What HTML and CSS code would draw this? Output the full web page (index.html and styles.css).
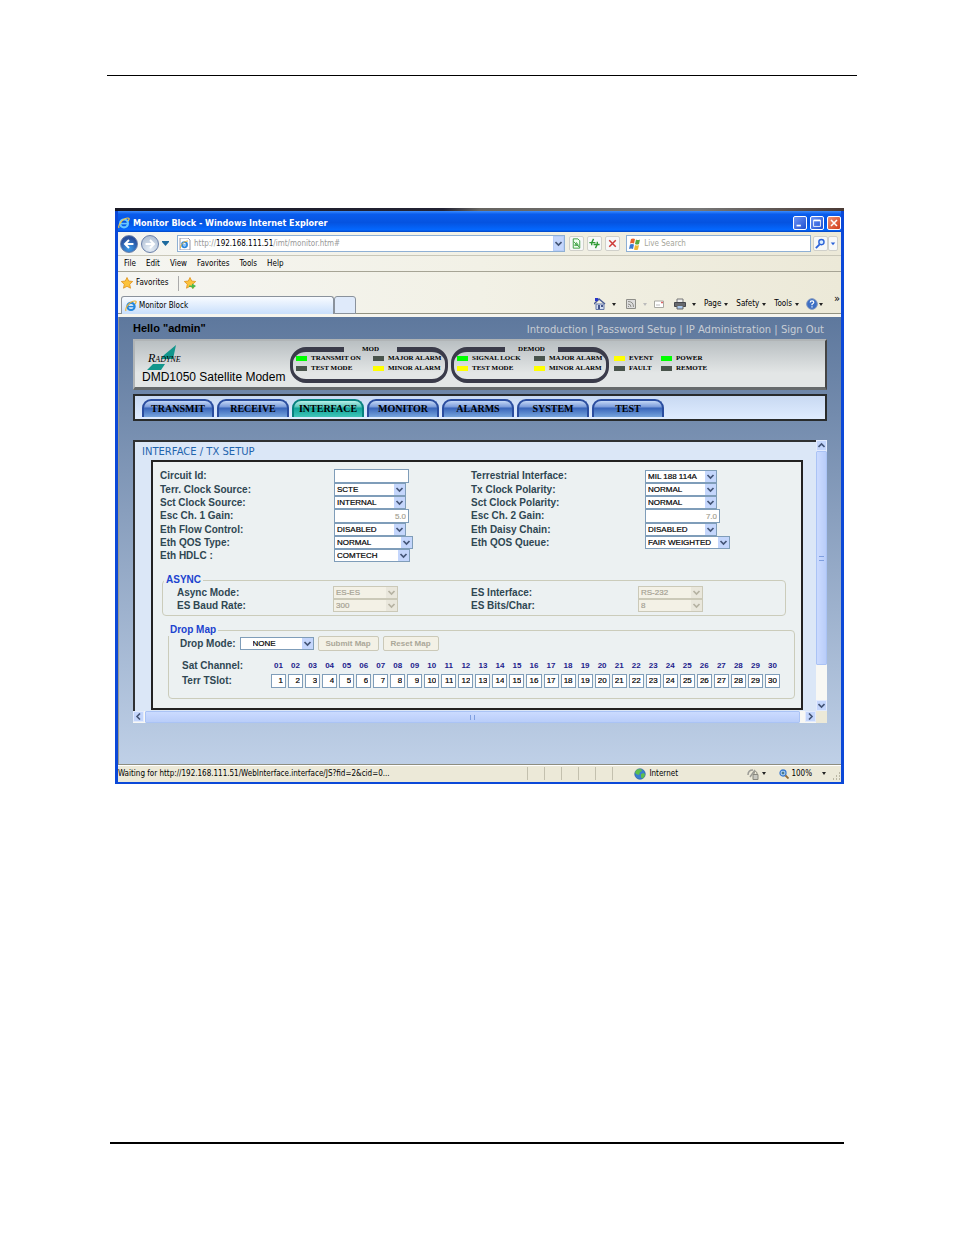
FILE: index.html
```html
<!DOCTYPE html>
<html lang="en">
<head>
<meta charset="utf-8">
<title>Monitor Block</title>
<link rel="stylesheet" href="styles.css">
</head>
<body>
<div class="sheet">
<hr class="rule-top">
<section class="window">
  <div class="desktop-strip"></div>
  <header class="titlebar">
    <svg class="ie" viewBox="0 0 12 12"><circle cx="6" cy="6.4" r="3.9" fill="none" stroke="#69c8ff" stroke-width="2.2"/><path d="M2.5 6.6h7" stroke="#69c8ff" stroke-width="1.6"/><path d="M1 11C-.5 8 5 1 10 1c2 0 1 2 0 3" fill="none" stroke="#f5c842" stroke-width="1.2"/></svg>
    <h1>Monitor Block - Windows Internet Explorer</h1>
    <button class="win-btn" aria-label="Minimize"><svg viewBox="0 0 14 14"><path d="M3 10h5" stroke="#fff" stroke-width="2"/></svg></button>
    <button class="win-btn" aria-label="Maximize"><svg viewBox="0 0 14 14"><path d="M3 4h8v7H3z" fill="none" stroke="#fff"/><path d="M3 4h8" stroke="#fff" stroke-width="2"/></svg></button>
    <button class="win-btn close" aria-label="Close"><svg viewBox="0 0 14 14"><path d="M3.5 3.5l7 7m0-7l-7 7" stroke="#fff" stroke-width="1.8"/></svg></button>
  </header>
  <div class="chrome">
    <div class="navrow">
      <button class="round back" aria-label="Back"><svg viewBox="0 0 18 18"><path d="M9 4.5L4.5 9 9 13.500M5 9h9" fill="none" stroke="#fff" stroke-width="2.2"/></svg></button>
      <button class="round fwd" aria-label="Forward"><svg viewBox="0 0 18 18"><path d="M9 4.5l4.500 4.500L9 13.500M13 9H4" fill="none" stroke="#fff" stroke-width="2.2"/></svg></button>
      <button class="bare recent" aria-label="Recent pages"><svg viewBox="0 0 7 5"><path d="M0 0h7v1L3.500 5 0 1z" fill="#1d6a9e"/></svg></button>
      <div class="address">
        <svg class="ie" viewBox="0 0 12 12"><path d="M1 0h8l2 2v10H1z" fill="#fff" stroke="#99a"/><circle cx="5.500" cy="6.800" r="2.600" fill="none" stroke="#2a86dd" stroke-width="1.700"/><path d="M3 7h5" stroke="#2a86dd"/><path d="M1.500 10C1 7 5 3 9 3" fill="none" stroke="#eeb73c"/></svg>
        <span class="url">http://<b>192.168.111.51</b>/imt/monitor.htm#</span>
        <button class="combo" aria-label="Show addresses"></button>
      </div>
      <button class="tool" aria-label="Compatibility view"><svg viewBox="0 0 14 14"><path d="M3.500 2h5l2 2v8h-7z" fill="#efe" stroke="#379c3c"/><path d="M5 9l2-3 2 3zM4 5l6 6" fill="none" stroke="#379c3c"/></svg></button>
      <button class="tool" aria-label="Refresh"><svg viewBox="0 0 14 14"><path d="M6 2L4 6h4M1.500 6H4v3M8 12l2-4H6M12.500 8H10V5" fill="none" stroke="#2f9a34" stroke-width="1.500"/></svg></button>
      <button class="tool" aria-label="Stop"><svg viewBox="0 0 14 14"><path d="M3.500 3.500l7 7m0-7l-7 7" stroke="#ce3a38" stroke-width="1.600"/></svg></button>
      <div class="search">
        <svg class="ie" viewBox="0 0 12 12"><path d="M2 1q2-1 4 0L5 5.500q-2-1-4 0z" fill="#e8622c"/><path d="M7 1.500q2 1 4 0L10 6q-2 1-4 0z" fill="#5aaa3c"/><path d="M1 6.500q2-1 4 0L4 11q-2-1-4 0z" fill="#3a78d0"/><path d="M6 7q2 1 4 0L9 11.500q-2 1-4 0z" fill="#f0b832"/></svg>
        <input type="text" placeholder="Live Search" aria-label="Live Search">
      </div>
      <div class="search-btns">
        <button class="tool" aria-label="Search"><svg viewBox="0 0 14 14"><circle cx="8" cy="5.500" r="2.800" fill="#d8ecff" stroke="#2a62d8" stroke-width="1.500"/><path d="M6 8l-4 4" stroke="#2a62d8" stroke-width="2"/></svg></button>
        <button class="tool slim" aria-label="Search options"><svg viewBox="0 0 9 14"><path d="M2 6h5L4.500 9z" fill="#2a62d8"/></svg></button>
      </div>
    </div>
    <nav class="menubar"><a href="#">File</a><a href="#">Edit</a><a href="#">View</a><a href="#">Favorites</a><a href="#">Tools</a><a href="#">Help</a></nav>
    <div class="favbar">
      <svg viewBox="0 0 12 12"><path d="M6 .5l1.700 3.500 4 .5-3 2.700.8 4L6 9.300 2.500 11.200l.8-4-3-2.700 4-.5z" fill="#fcc33c" stroke="#e0921c" stroke-width=".8"/></svg>
      <a href="#">Favorites</a><i></i>
      <svg viewBox="0 0 12 12"><path d="M6 .5l1.700 3.500 4 .5-3 2.700.8 4L6 9.300 2.500 11.200l.8-4-3-2.700 4-.5z" fill="#fcc33c" stroke="#e0921c" stroke-width=".8"/><path d="M5 8.500h3v-2L12 9l-4 3v-2H5z" fill="#4cb84a"/></svg>
    </div>
    <div class="tabrow">
      <a class="page-tab" href="#"><svg class="ie" viewBox="0 0 12 12"><circle cx="6" cy="6.400" r="3.600" fill="none" stroke="#2488dd" stroke-width="2.200"/><path d="M2.500 6.600h7" stroke="#2488dd" stroke-width="1.400"/><path d="M1 11C-.5 8 5 1 10 1c2 0 1 2 0 3" fill="none" stroke="#eab43a" stroke-width="1.200"/></svg>Monitor Block</a>
      <button class="new-tab" aria-label="New tab"></button>
      <div class="commands">
        <svg class="c-home" viewBox="0 0 12 12"><path d="M0 6l5-5 6 5" fill="none" stroke="#4a5d94" stroke-width="1.500"/><path d="M2 6h8v5.500H2z" fill="#d3def2" stroke="#6679a8"/><path d="M4 7h2v4H4zM7 7h2v2H7z" fill="#45568a"/><path d="M1 0h3v3H1z" fill="#2834c8"/></svg><span class="caret"></span>
        <svg class="c-rss" viewBox="0 0 10 10"><path d="M.5.500h9v9h-9z" fill="#ddd" stroke="#8e8e88"/><path d="M2 7.500h1M2 5q3 0 3 3M2 2.500q5.500 0 5.500 5.500" fill="none" stroke="#8e8e88"/></svg><span class="caret pale"></span>
        <svg class="c-mail" viewBox="0 0 10 10"><path d="M.5 2h9v6.500h-9z" fill="#fff" stroke="#a9a9a2"/><path d="M2 6h4" stroke="#bbb"/><path d="M7 3.500h2" stroke="#d66" stroke-width="1.500"/></svg>
        <svg class="c-print" viewBox="0 0 12 12"><path d="M3 1h6v4H3z" fill="#eee" stroke="#777"/><path d="M.5 4.500h11v4H.500z" fill="#67696e" stroke="#45474c"/><path d="M3 7.500h6v3.500H3z" fill="#a9c8ee" stroke="#666"/></svg><span class="caret"></span>
        <a href="#">Page<span class="caret"></span></a><a href="#">Safety<span class="caret"></span></a><a href="#">Tools<span class="caret"></span></a>
        <button class="bare help" aria-label="Help"><svg viewBox="0 0 12 12"><circle cx="6" cy="6" r="5.300" fill="#3d6fc4" stroke="#7d93bd"/><path d="M4.200 4.500q0-1.700 1.800-1.700t1.800 1.500q0 1-1.800 1.900v1M6 8.300v1.300" fill="none" stroke="#fff" stroke-width="1.200"/></svg><span class="caret"></span></button>
        <span class="more">»</span>
      </div>
    </div>
  </div>

  <main class="viewport">
    <div class="hello"><strong>Hello "admin"</strong>
      <nav><a href="#">Introduction</a> | <a href="#">Password Setup</a> | <a href="#">IP Administration</a> | <a href="#">Sign Out</a></nav></div>
    <section class="device">
      <div class="brand">
        <svg viewBox="0 0 36 25" role="img" aria-label="Radyne"><path d="M29 0L17 10l-3 4h12zM6 19h12l-4 6H0z" fill="#12968c"/><text x="1" y="17" class="radyne"><tspan font-size="12">R</tspan>ADYNE</text></svg>
        <h2>DMD1050 Satellite Modem</h2>
      </div>
      <fieldset class="leds"><legend>MOD</legend>
        <span class="on">TRANSMIT ON</span><span>MAJOR ALARM</span><span>TEST MODE</span><span class="warn">MINOR ALARM</span></fieldset>
      <fieldset class="leds"><legend>DEMOD</legend>
        <span class="on">SIGNAL LOCK</span><span>MAJOR ALARM</span><span class="warn">TEST MODE</span><span class="warn">MINOR ALARM</span></fieldset>
      <div class="leds unit"><span class="warn">EVENT</span><span class="on">POWER</span><span>FAULT</span><span>REMOTE</span></div>
    </section>
    <nav class="tabs"><a href="#">TRANSMIT</a><a href="#">RECEIVE</a><a href="#" class="active">INTERFACE</a><a href="#">MONITOR</a><a href="#">ALARMS</a><a href="#">SYSTEM</a><a href="#">TEST</a></nav>

    <div class="frame">
      <div class="pane">
        <h3>INTERFACE / TX SETUP</h3>
        <form class="setup">
          <div class="fields">
            <label for="cid">Circuit Id:</label><input id="cid" type="text">
            <label for="ti">Terrestrial Interface:</label><select id="ti"><option>MIL 188 114A</option></select>
            <label for="tcs">Terr. Clock Source:</label><select id="tcs"><option>SCTE</option></select>
            <label for="tcp">Tx Clock Polarity:</label><select id="tcp"><option>NORMAL</option></select>
            <label for="scs">Sct Clock Source:</label><select id="scs"><option>INTERNAL</option></select>
            <label for="scp">Sct Clock Polarity:</label><select id="scp"><option>NORMAL</option></select>
            <label for="g1">Esc Ch. 1 Gain:</label><input id="g1" type="text" value="5.0" disabled>
            <label for="g2">Esc Ch. 2 Gain:</label><input id="g2" type="text" value="7.0" disabled>
            <label for="efc">Eth Flow Control:</label><select id="efc"><option>DISABLED</option></select>
            <label for="edc">Eth Daisy Chain:</label><select id="edc"><option>DISABLED</option></select>
            <label for="eqt">Eth QOS Type:</label><select id="eqt" class="w-79"><option>NORMAL</option></select>
            <label for="eqq">Eth QOS Queue:</label><select id="eqq" class="w-85"><option>FAIR WEIGHTED</option></select>
            <label for="hdlc">Eth HDLC :</label><select id="hdlc" class="w-76"><option>COMTECH</option></select>
          </div>
          <fieldset class="group async"><legend>ASYNC</legend>
            <div class="async-grid">
            <label for="am">Async Mode:</label><select id="am" disabled><option>ES-ES</option></select>
            <label for="esi">ES Interface:</label><select id="esi" disabled><option>RS-232</option></select>
            <label for="ebr">ES Baud Rate:</label><select id="ebr" disabled><option>300</option></select>
            <label for="ebc">ES Bits/Char:</label><select id="ebc" disabled><option>8</option></select>
            </div>
          </fieldset>
          <fieldset class="group drop"><legend>Drop Map</legend>
            <div class="mode"><label for="dm">Drop Mode:</label><select id="dm"><option>NONE</option></select><button type="button" disabled class="submit">Submit Map</button><button type="button" disabled>Reset Map</button></div>
            <table class="slots"><tbody><tr id="channels"><th scope="row">Sat Channel:</th></tr><tr id="slots"><th scope="row">Terr TSlot:</th></tr></tbody></table>
          </fieldset>
        </form>
      </div>
      <div class="vbar"><button type="button" class="sb up" aria-label="Scroll up"></button><div class="thumb"><i></i></div><button type="button" class="sb down" aria-label="Scroll down"></button></div>
      <div class="hbar"><button type="button" class="sb left" aria-label="Scroll left"></button><div class="thumb"><i></i></div><button type="button" class="sb right" aria-label="Scroll right"></button></div>
      <div class="corner"></div>
    </div>
  </main>

  <footer class="status">
    <span class="msg">Waiting for http://192.168.111.51/WebInterface.interface/JS?fid=2&amp;cid=0...</span>
    <i></i><i></i><i></i><i></i><i></i><i></i>
    <span class="zone"><svg viewBox="0 0 12 12"><circle cx="6" cy="6" r="5.300" fill="#3a7ed0" stroke="#2a5f9a" stroke-width=".6"/><path d="M3 1.500l4-.5 1 2-2 1-1 3-3-1-1-2zM7 6l3-1 1 2-2 3.500-2-1z" fill="#5fc04a"/></svg>Internet</span>
    <span class="lock"><svg viewBox="0 0 12 12"><path d="M1 7q0-5 5-5M3 9l5-7" fill="none" stroke="#9c9c96" stroke-width="1.500"/><path d="M6 6.500h5v5H6z" fill="#c7c7c0" stroke="#88887f"/><path d="M7 6.500v-2q1.500-2 3 0v2" fill="none" stroke="#88887f"/></svg><span class="caret"></span></span>
    <button class="bare zoom"><svg viewBox="0 0 10 10"><circle cx="4" cy="4" r="3" fill="#bfe0ff" stroke="#3a7ad0" stroke-width="1.300"/><path d="M2.500 4h3M4 2.500v3" stroke="#256"/><path d="M6.500 6.500l3 3" stroke="#936b35" stroke-width="1.800"/></svg>100%<span class="caret"></span></button>
    <svg class="grip" viewBox="0 0 10 10"><path d="M8 2h1M8 5h1M5 5h1M8 8h1M5 8h1M2 8h1" stroke="#aaa793" stroke-width="1.500"/></svg>
  </footer>
</section>
<hr class="rule-bottom">
</div>
<script src="slots.js"></script>
</body>
</html>
```
FILE: slots.js
```js
const channels = document.getElementById('channels');
const slots = document.getElementById('slots');
for (let n = 1; n <= 30; n++) {
  const head = document.createElement('td');
  head.textContent = String(n).padStart(2, '0');
  channels.append(head);
  const cell = document.createElement('td');
  const input = document.createElement('input');
  input.type = 'text';
  input.value = n;
  input.setAttribute('aria-label', 'Terr TSlot ' + n);
  cell.append(input);
  slots.append(cell);
}
```
FILE: styles.css
```css
* { box-sizing: border-box; }
body { margin: 0; background: #fff; color: #000; font: 8px/10px "DejaVu Sans Condensed", "DejaVu Sans", sans-serif; }
a { color: inherit; text-decoration: none; }
button, input, select { font: inherit; margin: 0; padding: 0; border-radius: 0; }
h1, h2, h3 { margin: 0; }
svg { display: block; flex: none; }
.sheet { padding: 75px 110px 90px 115px; }
hr { border: 0; margin: 0; background: #000; }
.rule-top { height: 1px; margin: 0 -13px 132px -8px; }
.rule-bottom { height: 2px; margin: 358px 0 0 -5px; }
.bare { display: flex; align-items: center; border: 0; background: none; }
.caret { display: inline-block; flex: none; border: 2px solid transparent; border-top: 3px solid #222; border-bottom: 0; }
.caret.pale { border-top-color: #bbb; }

/* browser window */
.window { border: solid #0b48d8; border-width: 0 3px 2px; background: #ece9d8; }
.desktop-strip { height: 3px; margin: 0 -3px; background: linear-gradient(90deg, #1a1a26, #223 45%, #666460 50%, #777 80%, #4a3a35); }
.titlebar { display: flex; align-items: center; gap: 3px; height: 21px; padding: 2px 0 0 0; background: linear-gradient(#3a8cff, #0a5cec 15%, #0553e0 55%, #0468ff 90%, #0344c0); }
.titlebar h1 { flex: 1; color: #fff; font: bold 9px/12px "DejaVu Sans Condensed", sans-serif; }
.ie { width: 12px; height: 12px; }
.win-btn { width: 14px; height: 14px; border: 1px solid #fff; border-radius: 2px; background: linear-gradient(135deg, #6e95f5, #1e4fd0); }
.win-btn svg { width: 12px; height: 12px; }
.win-btn.close { background: linear-gradient(135deg, #f09274, #d13c1a); }
.chrome { background: linear-gradient(90deg, #f5f5f1, #f2f1e6 50%, #ece9d8); }
.navrow { display: flex; align-items: center; height: 23px; padding: 0 3px 0 2px; }
.round { width: 18px; height: 18px; margin-right: 3px; border: 1px solid #6a7fa8; border-radius: 50%; }
.round svg { width: 16px; height: 16px; }
.back { background: radial-gradient(circle at 50% 80%, #3d9ae8, #274f9c 70%); }
.fwd { background: radial-gradient(circle at 50% 80%, #e6eef6, #b3c2d6 80%); }
.recent { width: 7px; margin-right: 8px; }
.recent svg { width: 7px; height: 5px; }
.address, .search { display: flex; align-items: center; gap: 3px; height: 17px; border: 1px solid #8fb0d4; background: #fff; }
.address { flex: 390; padding-left: 1px; margin-right: 4px; }
.url { flex: 1; color: #999; white-space: nowrap; }
.url b { font-weight: normal; color: #000; }
.combo { width: 11px; height: 15px; border: 1px solid #b8cdf8; background: #c4d6fc url("data:image/svg+xml,%3Csvg xmlns='http://www.w3.org/2000/svg' width='7' height='6'%3E%3Cpath d='M.5 1l3 3 3-3' fill='none' stroke='%23445577' stroke-width='1.6'/%3E%3C/svg%3E") center no-repeat; }
.tool { width: 15px; height: 15px; margin-right: 3px; border: 1px solid #d0d0ca; border-radius: 2px; background: #f7f8f8; }
.tool svg { width: 13px; height: 13px; }
.tool.slim { width: 10px; }
.tool.slim svg { width: 8px; }
.search { flex: 183; margin: 0 2px 0 3px; padding-left: 2px; }
.search input { flex: 1; min-width: 0; border: 0; outline: 0; background: none; }
.search input::placeholder { color: #a5a59a; opacity: 1; }
.search-btns { display: flex; }
.search-btns .tool { margin: 0; }
.menubar { display: flex; align-items: center; gap: 10px; height: 17px; padding-left: 6px; border: solid #c9c7b8; border-width: 1px 0; border-bottom-color: #a6a495; }
.favbar { display: flex; align-items: center; gap: 3px; height: 22px; padding-left: 3px; }
.favbar svg { width: 12px; height: 12px; }
.favbar i { width: 1px; height: 15px; margin: 0 2px 0 7px; background: #aaa; }
.tabrow { display: flex; align-items: flex-end; height: 23px; padding-left: 3px; border-bottom: 3px solid #f6f5ee; box-shadow: inset 0 -1px #929282, 0 1px #7c8078; }
.page-tab { display: flex; align-items: center; gap: 2px; width: 213px; height: 18px; padding-left: 3px; border: 1px solid #8a929c; border-bottom: 0; border-radius: 3px 3px 0 0; background: linear-gradient(#f8fbff, #c9dffb); }
.new-tab { width: 22px; height: 18px; border: 1px solid #8a929c; border-radius: 3px 3px 0 0; background: #dfeafa; }
.commands { flex: 1; display: flex; align-items: center; justify-content: flex-end; height: 20px; padding-right: 1px; }
.commands a { display: flex; align-items: center; gap: 3px; margin-left: 8px; }
.c-home, .c-print, .help svg { width: 12px; height: 12px; margin-right: 6px; }
.c-rss, .c-mail { width: 10px; height: 10px; margin: 0 7px 0 10px; }
.c-mail { margin: 0 10px 0 7px; }
.help { margin-left: 7px; }
.help svg { margin-right: 1px; }
.more { margin: -10px 0 0 11px; font-size: 11px; }

/* device page */
.viewport { padding: 1px 14px 41px; border-left: 1px solid #9a9a90; background: linear-gradient(#5e789d, #bfd0e7); }
.hello { display: flex; align-items: center; height: 20px; margin-bottom: 1px; font: 11px/14px "Liberation Sans", Arial, sans-serif; }
.hello nav { flex: 1; padding: 3px 3px 0 0; text-align: right; color: #c8cdd4; font: 10px/12px "DejaVu Sans", sans-serif; }
.device { display: flex; align-items: flex-start; height: 51px; padding: 4px 0 0 7px; border: 2px solid #b0b4b6; border-right-color: #444; border-bottom: 3px solid #666a6c; background: linear-gradient(#b9bfc2, #e3e6e6 70%); }
.brand { width: 148px; }
.brand svg { width: 36px; height: 25px; margin-left: 5px; overflow: visible; }
.radyne { font: italic 8px "Liberation Serif", serif; }
.brand h2 { font: 12px/14px "Liberation Sans", Arial, sans-serif; white-space: nowrap; }
.leds { display: grid; grid-template-columns: 77px auto; row-gap: 1px; width: 158px; height: 38px; margin: 0 3px 0 0; padding: 0 0 0 3px; border: 3px solid #3a3b4a; border-width: 5px 3px 4px; border-radius: 16px; font: bold 7px/9px "Liberation Serif", serif; align-content: start; }
.leds legend { width: 53px; margin: 0 auto; padding: 0; text-align: center; }
.leds span { display: flex; align-items: center; gap: 4px; white-space: nowrap; }
.leds span::before { content: ""; width: 11px; height: 5px; background: #49544c; }
.leds .on::before { background: #00ff00; }
.leds .warn::before { background: #ffff00; }
.leds.unit { grid-template-columns: 47px auto; width: auto; margin: 0; padding: 9px 0 0 2px; border: 0; }
.tabs { display: flex; align-items: flex-end; gap: 3px; height: 27px; margin: 4px 0 19px; padding: 0 7px 2px; border: 2px solid #282b2c; background: linear-gradient(#c8d9f2, #dfecff); }
.tabs a { display: flex; align-items: center; justify-content: center; width: 72px; height: 18px; border: 2px solid #2a4d9f; border-bottom-width: 0; border-radius: 9px 9px 0 0; background: linear-gradient(#c3d7f6, #7f9fdc 35%, #3a66ba 45%, #76a4dc); font: bold 10px/12px "Liberation Serif", serif; }
.tabs .active { border-color: #07807e; background: linear-gradient(#b8f0e8, #5cc8bd 35%, #12a49a 45%, #3fc4b8); }
.frame { display: grid; grid-template-columns: 1fr 11px; grid-template-rows: auto 12px; }
.pane { padding: 4px 13px 1px 7px; border: solid #2f3133; border-width: 2px 0 0 2px; background: #dbe7f7; }
.pane h3 { color: #1f64ad; font: 10px/12px "DejaVu Sans", sans-serif; }
.setup { margin: 2px 0 0 9px; padding: 7px 6px 9px 7px; border: 2px solid #222; background: #ecf1f2; font: bold 10px/12px "Liberation Sans", Arial, sans-serif; color: #2f4752; }
.fields { display: grid; grid-template-columns: 174px 137px 174px auto; grid-auto-rows: minmax(13px, auto); align-items: center; justify-items: start; }
.setup input, .setup select { border: 1px solid #7f9db9; background: #fff; color: #000; font: 8px/11px "Liberation Sans", Arial, sans-serif; -webkit-text-stroke: 0.2px; }
.setup input { width: 75px; height: 14px; padding: 0 2px; }
.setup select { appearance: none; width: 72px; height: 13px; padding: 0 12px 0 2px; opacity: 1; background: #fff url("data:image/svg+xml,%3Csvg xmlns='http://www.w3.org/2000/svg' width='11' height='11'%3E%3Crect width='11' height='11' fill='%23c4d6fc'/%3E%3Cpath d='M2.500 4l3 3 3-3' fill='none' stroke='%23445577' stroke-width='1.700'/%3E%3C/svg%3E") right center no-repeat; }
.setup input:disabled { text-align: right; color: #a5a193; }
.setup .w-76 { width: 76px; }
.setup .w-79 { width: 79px; }
.setup .w-85 { width: 85px; }
.group { min-width: 0; border: 1px solid #cbccbb; border-radius: 4px; }
.group legend { margin-left: -13px; padding: 0 2px; color: #1a43cf; line-height: 12px; }
.async { margin: 12px 9px 0 2px; padding: 0 0 3px 14px; }
.async-grid { display: grid; grid-template-columns: 156px 138px 167px auto; grid-auto-rows: 13px; align-items: center; justify-items: start; }
.setup select:disabled { width: 65px; border-color: #cbc9b8; background-color: #f3f1e6; background-image: url("data:image/svg+xml,%3Csvg xmlns='http://www.w3.org/2000/svg' width='11' height='11'%3E%3Crect width='11' height='11' fill='%23e9e7dc'/%3E%3Cpath d='M2.500 4l3 3 3-3' fill='none' stroke='%23b5b2a2' stroke-width='1.700'/%3E%3C/svg%3E"); color: #a5a193; }
.drop { margin: 8px 0 0 8px; padding: 0 13px 10px 11px; }
.drop legend { margin-left: -12px; }
.mode { display: flex; align-items: center; gap: 4px; }
.mode select { width: 74px; padding-left: 12px; }
.mode button { width: 56px; height: 15px; border: 1px solid #cbc9b8; border-radius: 2px; background: #f3f1e6; color: #aaa798; font: bold 8px/11px "Liberation Sans", Arial, sans-serif; }
.mode .submit { width: 61px; }
.slots { width: 100%; margin-top: 7px; border-spacing: 0; table-layout: fixed; }
.slots th { width: 90px; padding: 0 0 0 2px; text-align: left; }
.slots td { padding: 0 1px; text-align: center; color: #22228c; font-size: 8px; }
.slots tr { height: 15px; }
.setup .slots input { display: block; width: 100%; text-align: right; }

/* scroll bars */
.vbar, .hbar { display: flex; background: #f8f8f4; }
.vbar { flex-direction: column; }
.sb { flex: none; width: 11px; height: 11px; border: 1px solid #e3ebfd; background: #c4d6fc url("data:image/svg+xml,%3Csvg xmlns='http://www.w3.org/2000/svg' width='7' height='6'%3E%3Cpath d='M.5 1l3 3 3-3' fill='none' stroke='%23445577' stroke-width='1.600'/%3E%3C/svg%3E") center no-repeat; }
.up { transform: rotate(180deg); }
.left { transform: rotate(90deg); }
.right { transform: rotate(-90deg); }
.thumb { display: flex; align-items: center; justify-content: center; border: 1px solid #aac3f5; border-radius: 1px; background: linear-gradient(90deg, #cbdbff, #b9cdf9); }
.vbar .thumb { flex: 0 1 79%; margin-bottom: auto; }
.hbar .thumb { flex: 1; margin: 0 5px 0 1px; background: linear-gradient(#cbdbff, #b9cdf9); }
.thumb i { width: 5px; height: 5px; border: solid #7f9fe0; border-width: 1px 0; }
.hbar .thumb i { border-width: 0 1px; }
.corner { background: #ece9d8; }

.status { display: flex; align-items: center; height: 18px; border-top: 1px solid #8e8e80; box-shadow: inset 0 1px #fff; }
.status .msg { flex: 1; white-space: nowrap; }
.status > i { width: 1px; height: 13px; margin-right: 16px; background: #c3c0ae; }
.zone, .lock { display: flex; align-items: center; gap: 3px; }
.zone { width: 113px; margin-left: 5px; }
.zone svg, .lock svg { width: 12px; height: 12px; }
.lock { width: 32px; }
.zoom { gap: 2px; }
.zoom svg { width: 10px; height: 10px; }
.zoom .caret { margin-left: 8px; }
.grip { width: 10px; height: 10px; margin: 5px 0 0 5px; }
```
